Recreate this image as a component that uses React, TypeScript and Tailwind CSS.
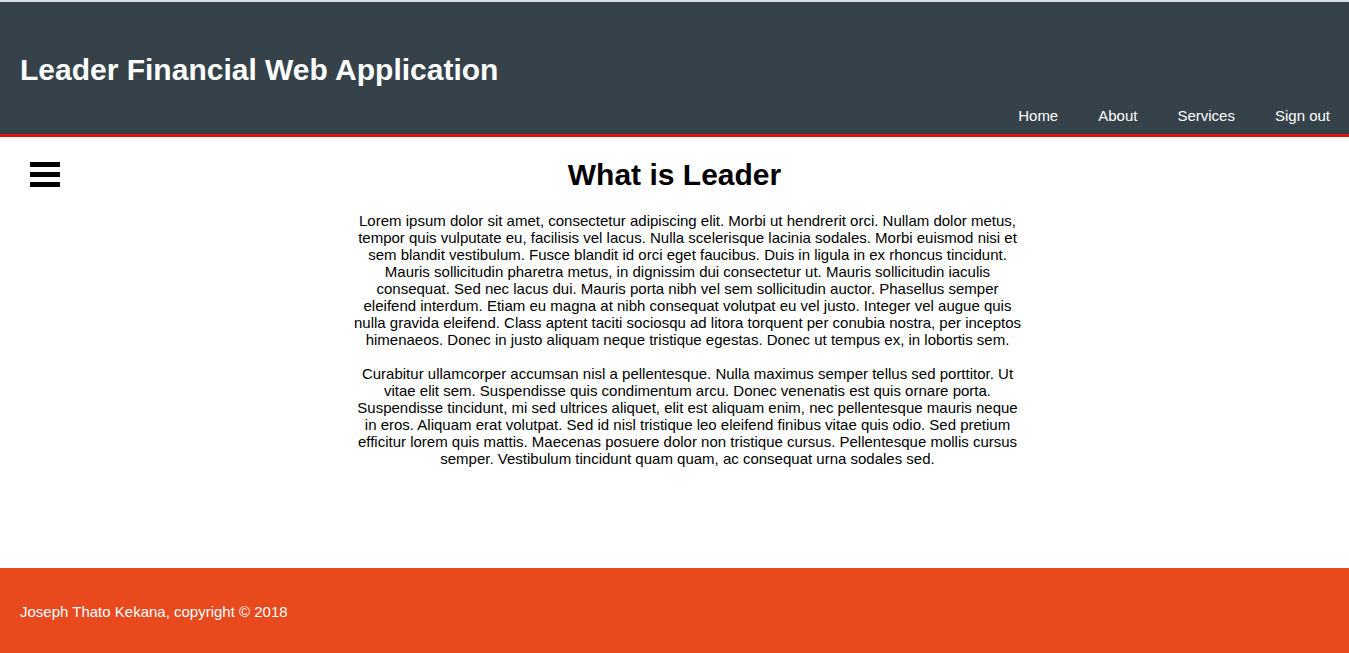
const links = ['Home', 'About', 'Services', 'Sign out'];

export default function App() {
  return (
    <div className="flex min-h-screen flex-col bg-white font-['Liberation_Sans',Arial,sans-serif] text-[15px] leading-[17px] text-black">
      <header className="border-t-2 border-b-3 border-t-[#d5dfe2] border-b-[#e3110a] bg-[#35424a] pt-12 pr-[19px] pb-[10px] pl-5 text-white">
        <h1 className="text-3xl leading-10 font-bold">Leader Financial Web Application</h1>
        <nav className="mt-[17px]">
          <ul className="flex flex-wrap justify-end gap-x-10">
            {links.map((link) => (
              <li key={link}>
                <a href="#">{link}</a>
              </li>
            ))}
          </ul>
        </nav>
      </header>
      <main className="grid flex-1 grid-cols-[1fr_2fr_1fr] pt-5">
        <div className="pt-[5px] pl-[30px]">
          <button type="button" aria-label="Open menu" className="flex flex-col gap-[5px]">
            <span className="h-[5px] w-[30px] bg-black" />
            <span className="h-[5px] w-[30px] bg-black" />
            <span className="h-[5px] w-[30px] bg-black" />
          </button>
        </div>
        <div className="text-center">
          <h2 className="text-3xl leading-9 font-bold">What is Leader</h2>
          <div className="-mr-[13px] mt-[19px] ml-[13px] flex flex-col gap-[17px]">
            <p>
              Lorem ipsum dolor sit amet, consectetur adipiscing elit. Morbi ut hendrerit orci. Nullam dolor metus, tempor quis vulputate eu, facilisis vel lacus. Nulla scelerisque lacinia sodales. Morbi euismod nisi et sem blandit vestibulum. Fusce blandit id orci eget faucibus. Duis in ligula in ex rhoncus tincidunt. Mauris sollicitudin pharetra metus, in dignissim dui consectetur ut. Mauris sollicitudin iaculis consequat. Sed nec lacus dui. Mauris porta nibh vel sem sollicitudin auctor. Phasellus semper eleifend interdum. Etiam eu magna at nibh consequat volutpat eu vel justo. Integer vel augue quis nulla gravida eleifend. Class aptent taciti sociosqu ad litora torquent per conubia nostra, per inceptos himenaeos. Donec in justo aliquam neque tristique egestas. Donec ut tempus ex, in lobortis sem.
            </p>
            <p>
              Curabitur ullamcorper accumsan nisl a pellentesque. Nulla maximus semper tellus sed porttitor. Ut vitae elit sem. Suspendisse quis condimentum arcu. Donec venenatis est quis ornare porta. Suspendisse tincidunt, mi sed ultrices aliquet, elit est aliquam enim, nec pellentesque mauris neque in eros. Aliquam erat volutpat. Sed id nisl tristique leo eleifend finibus vitae quis odio. Sed pretium efficitur lorem quis mattis. Maecenas posuere dolor non tristique cursus. Pellentesque mollis cursus semper. Vestibulum tincidunt quam quam, ac consequat urna sodales sed.
            </p>
          </div>
        </div>
      </main>
      <footer className="bg-[#e8491d] px-5 pt-[35px] pb-[33px] text-white">
        <p>Joseph Thato Kekana, copyright © 2018</p>
      </footer>
    </div>
  );
}
